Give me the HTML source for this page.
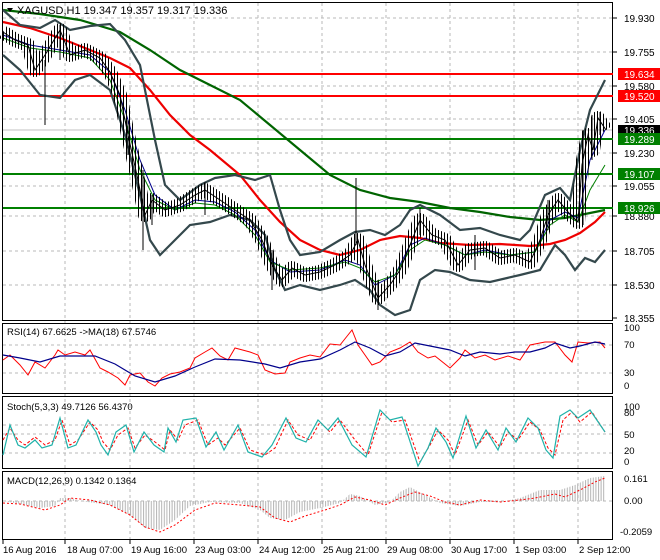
<!DOCTYPE html>
<html><head><meta charset="utf-8"><style>
html,body{margin:0;padding:0;background:#fff;}
svg{display:block;font-family:"Liberation Sans",sans-serif;}
</style></head><body>
<svg width="660" height="560" viewBox="0 0 660 560" xmlns="http://www.w3.org/2000/svg">
<defs>
<pattern id="vs" width="2.6" height="10" patternUnits="userSpaceOnUse"><rect x="0" y="0" width="1" height="10" fill="#b4b4b4"/></pattern>
<pattern id="cs" width="3" height="10" patternUnits="userSpaceOnUse"><rect x="0" y="0" width="1" height="10" fill="#000"/></pattern>
</defs>
<rect width="660" height="560" fill="#fff"/>
<g stroke="#b8b8b8" stroke-dasharray="3,3" stroke-width="1">
<line x1="65" y1="3" x2="65" y2="540"/><line x1="130" y1="3" x2="130" y2="540"/><line x1="194" y1="3" x2="194" y2="540"/><line x1="258" y1="3" x2="258" y2="540"/><line x1="322" y1="3" x2="322" y2="540"/><line x1="386" y1="3" x2="386" y2="540"/><line x1="450" y1="3" x2="450" y2="540"/><line x1="514" y1="3" x2="514" y2="540"/><line x1="578" y1="3" x2="578" y2="540"/>
<line x1="3" y1="18" x2="612" y2="18"/><line x1="3" y1="52" x2="612" y2="52"/><line x1="3" y1="86" x2="612" y2="86"/><line x1="3" y1="119" x2="612" y2="119"/><line x1="3" y1="153" x2="612" y2="153"/><line x1="3" y1="186" x2="612" y2="186"/><line x1="3" y1="216" x2="612" y2="216"/><line x1="3" y1="251" x2="612" y2="251"/><line x1="3" y1="285" x2="612" y2="285"/>
<line x1="3" y1="345" x2="612" y2="345"/><line x1="3" y1="373" x2="612" y2="373"/>
<line x1="3" y1="425" x2="612" y2="425"/><line x1="3" y1="434" x2="612" y2="434"/><line x1="3" y1="453" x2="612" y2="453"/>
<line x1="3" y1="501" x2="612" y2="501"/>
</g>
<line x1="3" y1="130" x2="612" y2="130" stroke="#c0c0c0"/>
<g fill="none" stroke="#000" stroke-width="1">
<rect x="2.5" y="2.5" width="610" height="318"/>
<rect x="2.5" y="323.5" width="610" height="70"/>
<rect x="2.5" y="396.5" width="610" height="72"/>
<rect x="2.5" y="471.5" width="610" height="68"/>
</g>
<g stroke-width="2">
<line x1="3" y1="74" x2="613" y2="74" stroke="#f00"/>
<line x1="3" y1="96" x2="613" y2="96" stroke="#f00"/>
<line x1="3" y1="139" x2="613" y2="139" stroke="#008000"/>
<line x1="3" y1="174" x2="613" y2="174" stroke="#008000"/>
<line x1="3" y1="208" x2="613" y2="208" stroke="#008000"/>
</g>
<polyline fill="none" stroke="#006400" stroke-width="2.2" points="3,10 40,14 80,20 120,32 150,50 180,70 210,85 240,100 270,125 300,150 330,175 360,190 390,198 420,202 450,208 480,212 510,217 540,220 565,218 585,214 605,210"/>
<polyline fill="none" stroke="#e00" stroke-width="2.2" points="3,22 30,28 60,38 90,50 110,58 130,68 150,90 170,115 190,135 210,150 240,175 260,200 280,222 300,240 320,250 340,255 360,250 380,240 400,236 420,238 440,243 470,245 500,244 530,246 550,244 565,240 580,233 595,222 605,212"/>
<g fill="none" stroke="#34484c" stroke-width="2.2">
<polyline points="3,10 20,25 40,28 55,20 70,30 90,26 110,24 125,40 140,65 155,140 165,185 180,200 200,185 215,178 235,175 255,180 270,175 280,210 290,240 300,255 320,252 340,240 355,232 370,230 385,235 400,225 410,210 420,205 440,215 460,230 480,228 500,235 520,240 530,230 545,195 560,188 570,200 580,150 590,110 600,90 605,80"/>
<polyline points="3,55 20,70 40,95 60,98 75,80 90,75 110,90 125,135 140,195 150,240 160,255 175,240 190,225 210,222 230,215 250,220 265,235 275,270 285,290 300,285 320,290 340,285 355,280 370,290 380,305 395,315 410,310 420,280 435,270 450,272 470,280 490,282 520,275 540,270 555,245 565,255 575,270 585,258 595,262 605,250"/>
</g>
<polyline fill="none" stroke="#00008b" stroke-width="1" points="3,35 30,45 60,50 90,55 110,72 125,110 140,160 155,195 175,210 195,200 215,202 235,212 255,230 270,260 290,272 320,270 345,260 360,265 375,285 395,275 410,245 425,238 445,245 465,255 485,250 510,255 535,252 550,220 565,212 578,218 590,160 605,130"/>
<polyline fill="none" stroke="#008000" stroke-width="1" points="3,38 30,48 60,52 90,58 110,80 125,120 140,170 155,200 175,210 195,203 215,205 235,215 255,235 270,262 290,270 320,268 345,262 360,268 375,282 395,275 410,250 425,240 445,245 465,255 485,252 510,255 535,252 550,225 565,215 578,222 590,190 605,165"/>
<polyline fill="none" stroke="url(#cs)" stroke-width="14" stroke-linejoin="round" points="3,32 15,40 28,45 35,70 45,55 60,30 70,55 85,50 100,58 110,72 120,95 128,135 138,180 145,215 152,200 165,210 180,205 195,195 205,190 220,200 235,210 250,220 262,240 272,265 282,280 292,268 305,275 320,272 335,265 350,255 358,240 365,265 378,298 390,285 400,270 410,245 420,220 432,235 445,240 458,265 470,250 485,248 500,258 515,255 530,262 540,240 548,215 558,200 568,212 578,222 582,165 588,135 593,150 598,118 606,130"/>
<polyline fill="none" stroke="#000" stroke-width="1" points="3,32 15,40 28,45 35,70 45,55 60,30 70,55 85,50 100,58 110,72 120,95 128,135 138,180 145,215 152,200 165,210 180,205 195,195 205,190 220,200 235,210 250,220 262,240 272,265 282,280 292,268 305,275 320,272 335,265 350,255 358,240 365,265 378,298 390,285 400,270 410,245 420,220 432,235 445,240 458,265 470,250 485,248 500,258 515,255 530,262 540,240 548,215 558,200 568,212 578,222 582,165 588,135 593,150 598,118 606,130"/>
<g stroke="#000" stroke-width="1">
<line x1="45" y1="60" x2="45" y2="125"/><line x1="60" y1="25" x2="60" y2="60"/><line x1="128" y1="120" x2="128" y2="155"/><line x1="143" y1="170" x2="143" y2="250"/><line x1="152" y1="195" x2="152" y2="225"/><line x1="205" y1="182" x2="205" y2="215"/><line x1="272" y1="250" x2="272" y2="290"/><line x1="356" y1="178" x2="356" y2="245"/><line x1="378" y1="280" x2="378" y2="310"/><line x1="420" y1="208" x2="420" y2="235"/><line x1="475" y1="235" x2="475" y2="270"/><line x1="548" y1="200" x2="548" y2="230"/><line x1="583" y1="130" x2="583" y2="225"/><line x1="592" y1="115" x2="592" y2="160"/><line x1="600" y1="112" x2="600" y2="135"/>
</g>
<path d="M7,8 L13,8 L10,12 Z" fill="#000"/>
<text x="17" y="14" font-size="11" fill="#000">XAGUSD,H1  19.347 19.357 19.317 19.336</text>
<g font-size="10" fill="#000">
<text x="624" y="22">19.930</text><text x="624" y="56">19.755</text><text x="624" y="90">19.580</text><text x="624" y="123">19.405</text><text x="624" y="157">19.230</text><text x="624" y="190">19.055</text><text x="624" y="220">18.880</text><text x="624" y="255">18.705</text><text x="624" y="289">18.530</text><text x="624" y="322">18.355</text>
</g>
<g font-size="10">
<rect x="618" y="68" width="42" height="12" fill="#f00"/><text x="624" y="78" fill="#fff">19.634</text>
<rect x="618" y="90" width="42" height="12" fill="#f00"/><text x="624" y="100" fill="#fff">19.520</text>
<rect x="618" y="125" width="42" height="11" fill="#000"/><text x="624" y="134" fill="#fff">19.336</text>
<rect x="618" y="133" width="42" height="12" fill="#008000"/><text x="624" y="143" fill="#fff">19.289</text>
<rect x="618" y="168" width="42" height="12" fill="#008000"/><text x="624" y="178" fill="#fff">19.107</text>
<rect x="618" y="202" width="42" height="12" fill="#008000"/><text x="624" y="212" fill="#fff">18.926</text>
</g>
<g stroke="#000"><line x1="613" y1="18" x2="617" y2="18"/><line x1="613" y1="52" x2="617" y2="52"/><line x1="613" y1="86" x2="617" y2="86"/><line x1="613" y1="119" x2="617" y2="119"/><line x1="613" y1="153" x2="617" y2="153"/><line x1="613" y1="186" x2="617" y2="186"/><line x1="613" y1="216" x2="617" y2="216"/><line x1="613" y1="251" x2="617" y2="251"/><line x1="613" y1="285" x2="617" y2="285"/><line x1="613" y1="318" x2="617" y2="318"/></g>
<polyline fill="none" stroke="#f00" stroke-width="1" points="3,360 10,355 20,365 28,375 35,362 45,368 55,355 58,350 65,355 75,352 85,355 90,350 100,368 108,372 118,378 125,385 130,375 140,373 148,382 155,386 162,378 170,374 180,372 190,368 195,358 205,352 212,348 220,356 228,360 235,348 250,352 258,355 265,370 275,374 285,373 290,362 300,358 310,355 320,357 330,344 340,345 348,335 352,330 358,345 365,355 372,365 380,362 390,352 400,348 410,342 418,352 428,358 435,356 440,360 450,368 460,358 465,350 475,358 485,355 495,360 508,356 520,360 530,345 545,342 555,342 565,355 572,362 578,342 588,343 600,342 605,348"/>
<polyline fill="none" stroke="#00008b" stroke-width="1.2" points="3,355 20,358 40,362 60,356 80,356 95,356 115,364 135,376 155,382 175,376 195,367 215,359 240,360 265,364 280,368 300,362 320,359 340,350 355,342 370,348 385,356 400,352 415,343 430,346 450,350 465,356 480,352 500,354 515,352 530,352 545,348 555,343 570,348 580,346 595,342 605,344"/>
<text x="7" y="335" font-size="9.5" fill="#000">RSI(14) 67.6625  -&gt;MA(18) 67.5746</text>
<g font-size="9.5" fill="#000"><text x="624" y="331">100</text><text x="624" y="348">70</text><text x="624" y="376">30</text><text x="624" y="389">0</text></g>
<polyline fill="none" stroke="#f00" stroke-width="1" stroke-dasharray="3,2" points="3,440 10,428 18,440 25,445 35,437 45,445 55,440 62,420 70,445 78,440 90,422 98,430 103,442 110,450 118,435 128,428 135,448 145,435 155,442 165,450 170,430 178,440 185,425 198,420 208,445 218,438 225,445 240,428 250,450 265,455 275,448 288,420 298,435 310,440 320,422 330,432 340,420 355,440 368,455 382,412 392,422 405,420 420,462 430,445 438,430 448,440 455,455 468,420 478,445 488,432 500,447 508,432 518,440 530,422 540,430 548,448 555,455 563,420 572,412 580,422 592,412 605,432"/>
<polyline fill="none" stroke="#20b2aa" stroke-width="1.2" points="3,455 10,425 18,445 25,448 35,440 42,448 52,445 60,418 68,448 76,445 88,420 96,432 101,445 108,455 116,432 126,425 134,452 144,432 154,445 164,452 168,428 176,442 183,420 196,418 206,447 216,432 224,450 238,425 248,452 262,457 272,445 286,418 296,438 306,442 318,420 328,430 338,418 352,445 366,457 380,410 390,420 402,417 418,466 428,448 436,428 446,442 453,458 466,416 476,448 486,430 498,450 506,428 516,442 528,418 538,428 546,450 553,458 560,416 570,410 578,418 590,410 605,432"/>
<text x="7" y="410" font-size="9.5" fill="#000">Stoch(5,3,3) 49.7126 56.4370</text>
<g font-size="9.5" fill="#000"><text x="624" y="410">100</text><text x="624" y="416">80</text><text x="624" y="438">50</text><text x="624" y="454">20</text><text x="624" y="465">0</text></g>
<polygon fill="url(#vs)" points="3,501 20,504 40,508 55,506 60,498 70,498 80,501 110,505 130,515 145,528 160,530 175,520 190,506 210,502 240,503 260,510 270,518 285,520 300,512 320,508 340,503 350,494 360,496 375,505 390,502 400,492 410,487 425,495 440,503 460,506 480,502 500,502 520,498 540,490 560,490 575,485 590,478 605,476 605,501"/>
<polyline fill="none" stroke="#f00" stroke-width="1" stroke-dasharray="2,2" points="3,503 20,504 45,510 60,505 70,498 90,500 110,505 130,515 145,527 160,532 175,525 195,510 215,503 240,505 260,507 275,518 290,522 305,516 325,510 340,505 355,497 370,500 385,505 400,498 415,492 430,496 445,502 460,505 480,500 500,502 520,500 535,498 555,494 565,497 580,490 595,482 605,478"/>
<text x="7" y="484" font-size="9.5" fill="#000">MACD(12,26,9) 0.1342 0.1364</text>
<g font-size="9.5" fill="#000"><text x="624" y="482">0.161</text><text x="624" y="504">0.00</text><text x="620" y="535">-0.2059</text></g>
<g stroke="#000"><line x1="3" y1="540" x2="3" y2="544"/><line x1="65" y1="540" x2="65" y2="544"/><line x1="130" y1="540" x2="130" y2="544"/><line x1="194" y1="540" x2="194" y2="544"/><line x1="258" y1="540" x2="258" y2="544"/><line x1="322" y1="540" x2="322" y2="544"/><line x1="386" y1="540" x2="386" y2="544"/><line x1="450" y1="540" x2="450" y2="544"/><line x1="514" y1="540" x2="514" y2="544"/><line x1="578" y1="540" x2="578" y2="544"/></g>
<g font-size="9.5" fill="#000">
<text x="3" y="553">16 Aug 2016</text><text x="67" y="553">18 Aug 07:00</text><text x="131" y="553">19 Aug 16:00</text><text x="195" y="553">23 Aug 03:00</text><text x="259" y="553">24 Aug 12:00</text><text x="323" y="553">25 Aug 21:00</text><text x="387" y="553">29 Aug 08:00</text><text x="451" y="553">30 Aug 17:00</text><text x="515" y="553">1 Sep 03:00</text><text x="579" y="553">2 Sep 12:00</text>
</g>
</svg>
</body></html>
